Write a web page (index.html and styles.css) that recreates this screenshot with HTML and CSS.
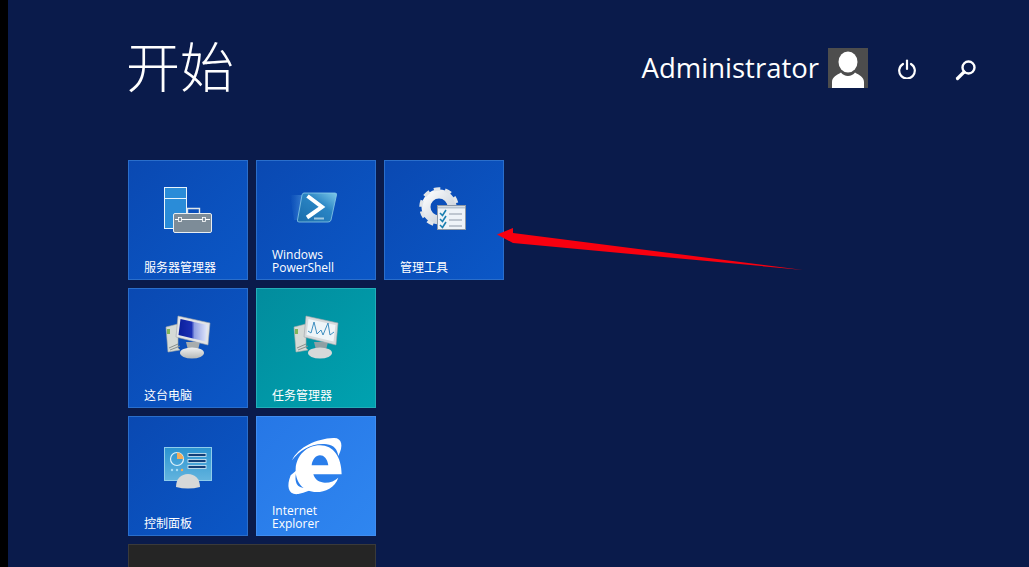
FILE: index.html
```html
<!DOCTYPE html>
<html lang="zh">
<head>
    <meta charset="UTF-8">
    <meta name="viewport" content="width=device-width, initial-scale=1.0">
    <title>开始</title>
    <link rel="stylesheet" href="styles.css">
</head>
<body>
    <div class="strip"></div>
    <main class="start">
        <header class="top">
            <h1 class="title">开始</h1>
            <div class="user">
                <span class="user-name">Administrator</span>
                <svg class="avatar" width="40" height="40" viewBox="0 0 40 40">
                    <rect width="40" height="40" fill="#4d4d4d"/>
                    <path d="M4 40 V34 C4 29 9 27 13 24.500 C16 29 24 29 27 24.500 C31 27 36 29 36 34 V40 Z" fill="#fff"/>
                    <ellipse cx="20" cy="14" rx="9.500" ry="10.500" fill="#fff"/>
                </svg>
                <svg class="power" width="20" height="20" viewBox="0 0 20 20" fill="none" stroke="#fff" stroke-width="2.200" stroke-linecap="round">
                    <path d="M6 5 A7.800 7.800 0 1 0 14 5"/>
                    <path d="M10 1.500 V10"/>
                </svg>
                <svg class="search" width="22" height="22" viewBox="0 0 22 22" fill="none" stroke="#fff">
                    <circle cx="13.500" cy="8.500" r="6" stroke-width="2.400"/>
                    <path d="M9 13 L2.500 19.500" stroke-width="3.200" stroke-linecap="round"/>
                </svg>
            </div>
        </header>

        <section class="tiles">
            <div class="tile">
                <svg class="tile-icon" width="64" height="64" viewBox="0 0 64 64">
                    <rect x="8.500" y="9.500" width="22" height="41" fill="#2a8cd8" stroke="#e8f4fc"/>
                    <path d="M8.500 20.500 H30.500" stroke="#e8f4fc"/>
                    <path d="M31.500 35 V30.500 H43.500 V35" fill="none" stroke="#dfe6ea" stroke-width="1.400"/>
                    <rect x="17.500" y="35.500" width="38" height="19" rx="1.500" fill="#7d8c98" stroke="#e8eef2"/>
                    <path d="M19 41.500 H54" stroke="#fff"/>
                    <rect x="22.500" y="39.500" width="3" height="4" fill="#7d8c98" stroke="#fff" stroke-width=".8"/>
                    <rect x="46.500" y="39.500" width="3" height="4" fill="#7d8c98" stroke="#fff" stroke-width=".8"/>
                </svg>
                <div class="tile-label">服务器管理器</div>
            </div>
            <div class="tile">
                <svg class="tile-icon" width="64" height="64" viewBox="0 0 64 64">
                    <defs>
                        <linearGradient id="psBlur" x1="0" x2="1" y1="0" y2="0">
                            <stop offset="0" stop-color="#4f9be0" stop-opacity="0"/>
                            <stop offset="1" stop-color="#6fb4e8" stop-opacity=".5"/>
                        </linearGradient>
                        <linearGradient id="psFace" x1="0" x2="1" y1="1" y2="0">
                            <stop offset="0" stop-color="#1a6cab"/>
                            <stop offset=".6" stop-color="#2a85c4"/>
                            <stop offset="1" stop-color="#7cc8ea"/>
                        </linearGradient>
                    </defs>
                    <path d="M6 17 H20 L15 42 H10 Z" fill="url(#psBlur)"/>
                    <path d="M20 15 H51 Q53 15 52.500 17 L47 42 Q46.500 44 44 44 H15 Q13 44 13.500 42 L18 17 Q18.500 15 20 15 Z" fill="url(#psFace)" stroke="#8ccbe8" stroke-width=".8"/>
                    <path d="M23.500 18 L38 29 L23 39.500" fill="none" stroke="#fff" stroke-width="4"/>
                    <path d="M30 40.500 H40" stroke="#9fc8e0" stroke-width="2"/>
                </svg>
                <div class="tile-label">Windows<br>PowerShell</div>
            </div>
            <div class="tile">
                <svg class="tile-icon" width="64" height="64" viewBox="0 0 64 64">
                    <defs>
                        <linearGradient id="gearFace" x1="0" x2="1" y1="0" y2="1">
                            <stop offset="0" stop-color="#fbfcfd"/>
                            <stop offset="1" stop-color="#c3ccd6"/>
                        </linearGradient>
                    </defs>
                    <circle cx="27" cy="29" r="13" fill="none" stroke="url(#gearFace)" stroke-width="9"/>
                    <circle cx="27" cy="29" r="18" fill="none" stroke="#e2e6ea" stroke-width="3.500" stroke-dasharray="6.500 4.800"/>
                    <rect x="25.500" y="27.500" width="28" height="24" fill="#eef3f8" stroke="#8d98a6"/>
                    <path d="M26 29.500 H53" stroke="#b8c4d0" stroke-width="2"/>
                    <path d="M28 35 L30.500 37.500 L34 32 M28 41 L30.500 43.500 L34 38 M28 47 L30.500 49.500 L34 44" fill="none" stroke="#1a7fb0" stroke-width="1.600"/>
                    <path d="M37 36 H50 M37 42 H50 M37 48 H50" stroke="#8e9aa8" stroke-width="1.200"/>
                </svg>
                <div class="tile-label">管理工具</div>
            </div>
            <div class="tile">
                <svg class="tile-icon" width="64" height="64" viewBox="0 0 64 64">
                    <defs>
                        <linearGradient id="screenBlue" x1="0" x2="1" y1="0" y2="0">
                            <stop offset="0" stop-color="#0a1f9c"/>
                            <stop offset=".45" stop-color="#1b2fb4"/>
                            <stop offset=".55" stop-color="#8f9fe4"/>
                            <stop offset="1" stop-color="#e4e9fa"/>
                        </linearGradient>
                        <linearGradient id="standFace" x1="0" x2="0" y1="0" y2="1">
                            <stop offset="0" stop-color="#f0f1f1"/>
                            <stop offset="1" stop-color="#b4b8b8"/>
                        </linearGradient>
                    </defs>
                    <path d="M10 21 L22 18 V42 L24 44 L12 46 Z" fill="#d5dad6" stroke="#a8aeaa" stroke-width=".6"/>
                    <path d="M11 23 H14 V28 H11 Z" fill="#7fb45a"/>
                    <path d="M13 42 L22 38 M14 44 L24 40" stroke="#8a908c"/>
                    <path d="M30 36 H44 L42 44 H32 Z" fill="#a8adad"/>
                    <ellipse cx="36" cy="47" rx="12" ry="5.500" fill="url(#standFace)"/>
                    <path d="M22 10 L54 17 L52 39 L20 31 Z" fill="#e2e4e6" stroke="#a0a5aa" stroke-width=".6"/>
                    <path d="M24.500 13 L51.500 19 L49.500 35.500 L22.500 29 Z" fill="url(#screenBlue)"/>
                </svg>
                <div class="tile-label">这台电脑</div>
            </div>
            <div class="tile tile-teal">
                <svg class="tile-icon" width="64" height="64" viewBox="0 0 64 64">
                    <path d="M10 21 L22 18 V42 L24 44 L12 46 Z" fill="#d5dad6" stroke="#a8aeaa" stroke-width=".6"/>
                    <path d="M11 23 H14 V28 H11 Z" fill="#7fb45a"/>
                    <path d="M13 42 L22 38 M14 44 L24 40" stroke="#8a908c"/>
                    <path d="M30 36 H44 L42 44 H32 Z" fill="#8fa0a4"/>
                    <ellipse cx="36" cy="47" rx="12" ry="5.500" fill="#d6d9d9"/>
                    <path d="M22 10 L54 17 L52 39 L20 31 Z" fill="#d6dadc" stroke="#a0a5aa" stroke-width=".6"/>
                    <path d="M24.500 13 L51.500 19 L49.500 35.500 L22.500 29 Z" fill="#eef5f8"/>
                    <path d="M24 25 L27 27 L30 16 L33 28 L37 24 L39 29 L44 17 L46 29 L50 26" fill="none" stroke="#3f8fc0"/>
                </svg>
                <div class="tile-label">任务管理器</div>
            </div>
            <div class="tile-spacer"></div>
            <div class="tile">
                <svg class="tile-icon" width="64" height="64" viewBox="0 0 64 64">
                    <defs>
                        <linearGradient id="panelFace" x1="0" x2="0" y1="0" y2="1">
                            <stop offset="0" stop-color="#2a93d0"/>
                            <stop offset="1" stop-color="#63b4de"/>
                        </linearGradient>
                    </defs>
                    <rect x="8.500" y="13.500" width="47" height="33" fill="url(#panelFace)" stroke="#8fcdec"/>
                    <circle cx="21" cy="25" r="6.500" fill="none" stroke="#dff1fa" stroke-width="1.200"/>
                    <path d="M21 18.500 A6.500 6.500 0 0 1 27.500 25 H21 Z" fill="#f4ad5c"/>
                    <rect x="32" y="19.500" width="18" height="3" fill="#123f78" stroke="#d8eef8" stroke-width=".8"/>
                    <rect x="32" y="25.500" width="18" height="3" fill="#123f78" stroke="#d8eef8" stroke-width=".8"/>
                    <rect x="32" y="31.500" width="18" height="3" fill="#123f78" stroke="#d8eef8" stroke-width=".8"/>
                    <circle cx="16" cy="36" r="1.200" fill="#a8dcf4"/>
                    <circle cx="21" cy="36" r="1.200" fill="#a8dcf4"/>
                    <circle cx="26" cy="36" r="1.200" fill="#f4ad5c"/>
                    <path d="M20 53 C20 45 25 40 32 40 C39 40 44 45 44 53 Q32 56 20 53 Z" fill="#d6d8d8"/>
                </svg>
                <div class="tile-label">控制面板</div>
            </div>
            <div class="tile tile-ie">
                <svg class="tile-icon tile-icon-sharp" width="64" height="64" viewBox="0 0 64 64">
                    <g transform="translate(-164 -22) scale(.3333)" fill="#fff">
                        <path fill-rule="evenodd" d="M665 187 H580 C585 205 600 212 615 212 C632 212 645 206 655 197 C645 228 615 240 590 240 C550 240 525 210 527 170 C530 130 560 100 600 100 C640 100 665 135 665 187 Z M575 160 H625 C622 140 612 130 600 130 C588 130 577 142 575 160 Z"/>
                        <path d="M516 145 C535 105 590 80 640 78 C665 76 672 100 655 132 C652 112 642 100 620 97 C575 92 540 115 516 145 Z"/>
                        <path d="M512 190 C498 225 506 250 535 246 C555 243 575 233 592 222 C565 230 538 232 530 215 C526 205 525 195 530 175 Z"/>
                    </g>
                </svg>
                <div class="tile-label">Internet<br>Explorer</div>
            </div>
            <div class="tile-spacer"></div>
            <div class="tile tile-dark"></div>
        </section>
    </main>

    <svg class="arrow" width="1029" height="567" viewBox="0 0 1029 567">
        <path d="M497 234.500 L513 228 L513 233 L803 270 L513 243 Z" fill="#f8000f"/>
    </svg>
</body>
</html>
```

FILE: styles.css
```css
html, body {
    margin: 0;
    height: 100%;
}

body {
    display: flex;
    height: 567px;
    overflow: hidden;
    background-color: #000;
    font-family: 'Noto Sans CJK SC', 'Noto Sans', sans-serif;
    color: #fff;
}

.strip {
    width: 8px;
    flex-shrink: 0;
}

.start {
    flex: 1;
    padding-left: 120px;
    background-color: #0a1b4b;
    overflow: hidden;
}

.top {
    display: flex;
    justify-content: space-between;
    height: 160px;
    padding-right: 52px;
}

.title {
    margin: 27px 0 0 -2px;
    font-size: 54px;
    font-weight: 300;
    line-height: 76px;
}

.user {
    display: flex;
    align-items: flex-start;
    padding-top: 48px;
}

.user-name {
    margin-right: 9px;
    font-family: 'Open Sans', sans-serif;
    font-size: 27.500px;
    line-height: 40px;
}

.power {
    margin: 11px 0 0 29px;
}

.search {
    margin: 11px 0 0 38px;
}

.tiles {
    display: grid;
    grid-template-columns: 120px 120px 120px;
    grid-auto-rows: 120px;
    gap: 8px;
}

.tile {
    display: flex;
    flex-direction: column;
    box-sizing: border-box;
    border: 1px solid #2a6ecb;
    background: linear-gradient(135deg, #0a49b2, #0b57c6);
}

.tile-teal {
    border-color: #22aeb8;
    background: linear-gradient(135deg, #028c9d, #00a2b0);
}

.tile-ie {
    border-color: #3f8cf0;
    background: linear-gradient(135deg, #2677e6, #2f86f0);
}

.tile-dark {
    grid-column: span 2;
    border-color: #3a3a3a;
    background: #252525;
}

.tile-icon {
    display: block;
    margin: 17px 0 0 27px;
    filter: blur(.4px);
}

.tile-icon-sharp {
    filter: none;
}

.tile-label {
    margin-top: auto;
    padding: 0 15px 5px;
    font-family: 'Open Sans', 'Noto Sans CJK SC', sans-serif;
    font-size: 12px;
    line-height: 13px;
}

.arrow {
    position: absolute;
    left: 0;
    top: 0;
    pointer-events: none;
}
```
